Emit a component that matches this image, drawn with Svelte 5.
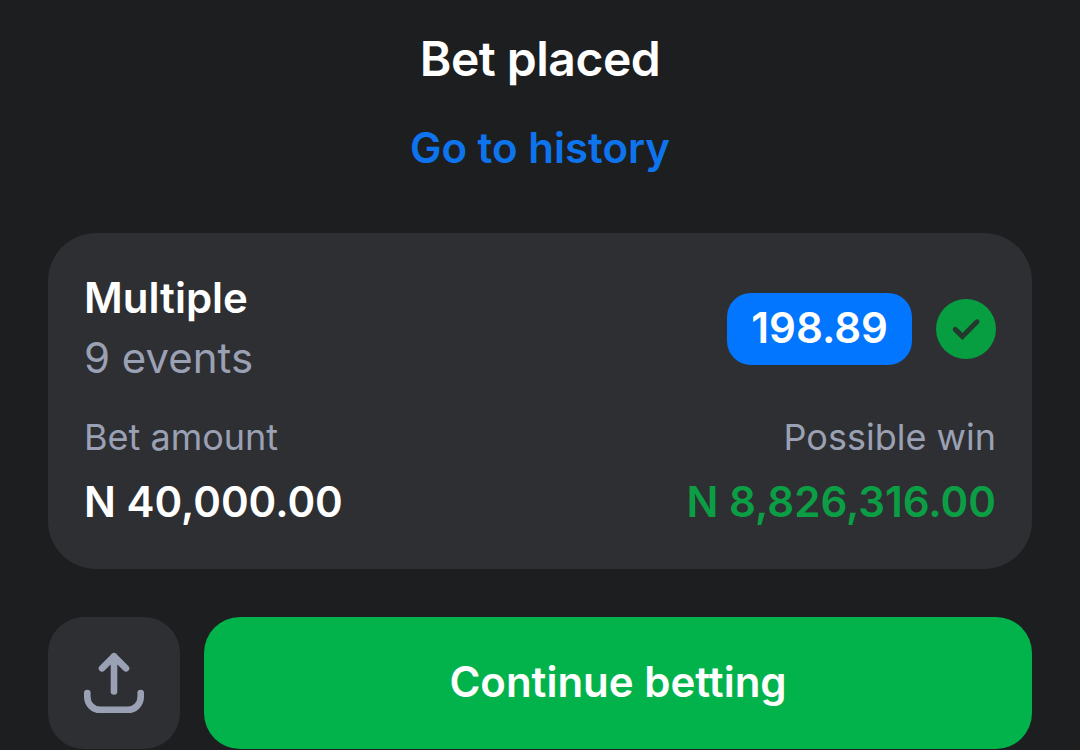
<script>
    const bet = {
        type: 'Multiple',
        events: 9,
        odds: '198.89',
        amount: 'N 40,000.00',
        win: 'N 8,826,316.00'
    };
</script>

<main class="sheet">
    <h1 class="title">Bet placed</h1>
    <a class="history" href="#history">Go to history</a>

    <section class="card">
        <div class="row">
            <div>
                <div class="type">{bet.type}</div>
                <div class="events">{bet.events} events</div>
            </div>
            <div class="status">
                <span class="odds">{bet.odds}</span>
                <svg width="60" height="60" viewBox="0 0 60 60" fill="none">
                    <circle cx="30" cy="30" r="30" fill="#079e41" />
                    <path d="M19.2 30.4l7.2 7L41 22.8" stroke="#23392e" stroke-width="5" stroke-linecap="round" stroke-linejoin="miter" />
                </svg>
            </div>
        </div>
        <div class="row sums">
            <div>
                <div class="label">Bet amount</div>
                <div class="amount">{bet.amount}</div>
            </div>
            <div class="right">
                <div class="label">Possible win</div>
                <div class="amount win">{bet.win}</div>
            </div>
        </div>
    </section>

    <div class="actions">
        <button class="share" aria-label="Share">
            <svg width="72" height="72" viewBox="0 0 72 72" fill="none" stroke="#9ba1b4" stroke-width="6.6" stroke-linecap="round" stroke-linejoin="round">
                <path d="M36 44.5V9.3M24 21.3l12-12 12 12" />
                <path d="M9.3 46v4a12.8 12.8 0 0 0 12.8 12.8h27.8A12.8 12.8 0 0 0 62.7 50v-4" />
            </svg>
        </button>
        <button class="continue">Continue betting</button>
    </div>
</main>

<style>
    :global(body) {
        background: #1d1e20;
    }
    .sheet {
        box-sizing: border-box;
        height: 750px;
        padding: 29px 48px 0;
        overflow: hidden;
        display: flex;
        flex-direction: column;
        font-family: Inter, sans-serif;
        font-size: 42px;
        line-height: 60px;
        color: #fff;
    }
    .title {
        margin: 0;
        font-size: 48px;
        font-weight: 600;
        text-align: center;
        letter-spacing: -0.5px;
    }
    .history {
        align-self: center;
        margin-top: 29px;
        color: #0d74ee;
        font-weight: 600;
        text-decoration: none;
    }
    .card {
        margin-top: 55px;
        padding: 35px 36px 37px;
        border-radius: 48px;
        background: #2e2f33;
    }
    .row {
        display: flex;
        align-items: center;
        justify-content: space-between;
    }
    .sums {
        margin-top: 25px;
    }
    .right {
        text-align: right;
    }
    .type,
    .amount {
        font-weight: 600;
    }
    .events,
    .label {
        color: #9ba1b4;
    }
    .label {
        font-size: 36px;
        line-height: 48px;
        margin-bottom: 11px;
    }
    .win {
        color: #0c9e45;
    }
    .status {
        display: flex;
        align-items: center;
        gap: 24px;
        padding-top: 2px;
    }
    .odds {
        padding: 5px 24px 7px;
        border-radius: 24px;
        background: #0376ff;
        font-weight: 600;
    }
    .actions {
        display: flex;
        gap: 24px;
        margin-top: 48px;
    }
    button {
        height: 132px;
        padding: 0;
        border: 0;
        border-radius: 36px;
        font: inherit;
        color: inherit;
    }
    .share {
        width: 132px;
        display: flex;
        align-items: center;
        justify-content: center;
        background: #2e2f33;
    }
    .continue {
        flex: 1;
        padding-bottom: 2px;
        background: #02b34c;
        font-weight: 600;
    }
</style>
